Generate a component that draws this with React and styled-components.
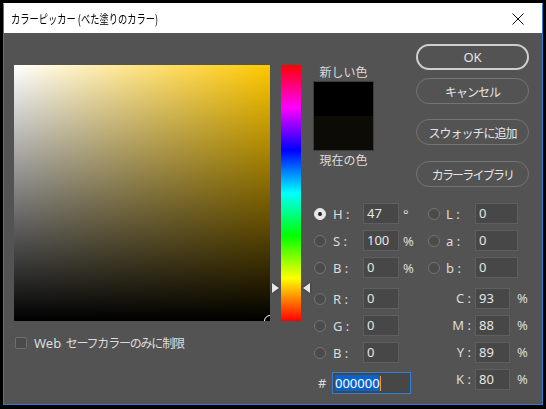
import React from 'react'
import styled, { createGlobalStyle } from 'styled-components';

const GlobalStyle = createGlobalStyle`
    html, body {
        margin: 0;
        padding: 0;
        background: #000;
    }
    body {
        font-family: "Noto Sans", "Noto Sans CJK JP", sans-serif;
    }
`;

const JP = '"Noto Sans CJK JP", "Noto Sans", sans-serif';

function Radio({ checked }) {
    return <RadioStyled $checked={checked} />
}

function Field({ label, value, unit, radio, checked }) {
    return (
        <>
            {radio ? <Radio checked={checked} /> : <span />}
            <Label>{label} :</Label>
            <Input>{value}</Input>
            <Unit>{unit}</Unit>
        </>
    )
}

const HUE = 47;

function App() {
    const arrowTop = 256 - Math.round(HUE / 360 * 256) - 5;
    return (
        <Page>
            <GlobalStyle />
            <Window>
                <TitleBar>
                    <Title><span>カラーピッカー (べた塗りのカラー)</span></Title>
                    <Close aria-label="close">
                        <svg width="12" height="12" viewBox="0 0 12 12">
                            <path d="M0.5 0.5 L11.5 11.5 M11.5 0.5 L0.5 11.5" stroke="#111" strokeWidth="1" />
                        </svg>
                    </Close>
                </TitleBar>
                <Body>
                    <LeftCol>
                        <ColorField>
                            <Marker />
                        </ColorField>
                        <CheckRow>
                            <Checkbox />
                            <CheckLabel><span>Web</span> セーフカラーのみに制限</CheckLabel>
                        </CheckRow>
                    </LeftCol>
                    <HueCol>
                        <HueBar>
                            <Arrow $side="left" style={{ top: `${arrowTop}px` }} />
                            <Arrow $side="right" style={{ top: `${arrowTop}px` }} />
                        </HueBar>
                    </HueCol>
                    <RightPanel>
                        <TopSection>
                            <SwatchCol>
                                <SwatchLabel>新しい色</SwatchLabel>
                                <Swatch>
                                    <SwatchHalf $color="#000" />
                                    <SwatchHalf $color="#0d0b06" />
                                </Swatch>
                                <SwatchLabel>現在の色</SwatchLabel>
                            </SwatchCol>
                            <ButtonCol>
                                <PillButton $primary>OK</PillButton>
                                <PillButton $mt={8}>キャンセル</PillButton>
                                <PillButton $mt={15}>スウォッチに追加</PillButton>
                                <PillButton $mt={16} $tight>カラーライブラリ</PillButton>
                            </ButtonCol>
                        </TopSection>

                        <HsbGrid>
                            <Field radio checked label="H" value="47" unit="°" />
                            <Radio />
                            <Label>L :</Label>
                            <Input>0</Input>

                            <Field radio label="S" value="100" unit="%" />
                            <Radio />
                            <Label>a :</Label>
                            <Input>0</Input>

                            <Field radio label="B" value="0" unit="%" />
                            <Radio />
                            <Label>b :</Label>
                            <Input>0</Input>
                        </HsbGrid>

                        <RgbGrid>
                            <Field radio label="R" value="0" />
                            <CmykLabel>C :</CmykLabel>
                            <Input>93</Input>
                            <CmykUnit>%</CmykUnit>

                            <Field radio label="G" value="0" />
                            <CmykLabel>M :</CmykLabel>
                            <Input>88</Input>
                            <CmykUnit>%</CmykUnit>

                            <Field radio label="B" value="0" />
                            <CmykLabel>Y :</CmykLabel>
                            <Input>89</Input>
                            <CmykUnit>%</CmykUnit>

                            <Hash>#</Hash>
                            <HexInput><Selected>000000</Selected><Caret /></HexInput>
                            <CmykLabel $top>K :</CmykLabel>
                            <Input $top>80</Input>
                            <CmykUnit $top>%</CmykUnit>
                        </RgbGrid>
                    </RightPanel>
                </Body>
            </Window>
        </Page>
    )
}

const Page = styled.div`
    width: 546px;
    height: 409px;
    padding: 3px 0 0 3px;
    box-sizing: border-box;
    background: #000;
    overflow: hidden;
`;

const Window = styled.div`
    width: 540px;
    height: 402px;
    box-sizing: border-box;
    border: 1px solid #2b7cd3;
    border-top-color: #fff;
    display: flex;
    flex-direction: column;
    background: #535353;
`;

const TitleBar = styled.div`
    height: 29px;
    background: #fff;
    display: flex;
    align-items: center;
    padding-left: 7px;
    flex-shrink: 0;
`;

const Title = styled.div`
    font-family: ${JP};
    font-size: 12.5px;
    color: #000;
    flex: 1;
    span {
        display: inline-block;
        transform: scaleX(0.74);
        transform-origin: left center;
        white-space: nowrap;
    }
`;

const Close = styled.div`
    width: 46px;
    height: 29px;
    display: flex;
    align-items: center;
    justify-content: center;
    margin-right: 1px;
`;

const Body = styled.div`
    flex: 1;
    display: flex;
    padding: 11px 0 0 10px;
    color: #dcdcdc;
`;

const LeftCol = styled.div`
    margin-top: 21px;
    width: 256px;
    display: flex;
    flex-direction: column;
`;

const ColorField = styled.div`
    width: 256px;
    height: 256px;
    position: relative;
    overflow: hidden;
    background:
        linear-gradient(to top, #000, rgba(0,0,0,0)),
        linear-gradient(to right, #fff, #ffc800);
`;

const Marker = styled.div`
    position: absolute;
    right: -6px;
    bottom: -6px;
    width: 10px;
    height: 10px;
    border: 1px solid #fff;
    border-radius: 50%;
`;

const CheckRow = styled.div`
    margin-top: 13px;
    margin-left: 1px;
    display: flex;
    align-items: center;
    gap: 7px;
`;

const Checkbox = styled.div`
    width: 10px;
    height: 10px;
    border: 1px solid #6f6f6f;
    border-radius: 2px;
    background: #4a4a4a;
`;

const CheckLabel = styled.div`
    font-family: ${JP};
    font-size: 12px;
    letter-spacing: -1.2px;
    color: #dcdcdc;
    span {
        font-family: "Noto Sans", sans-serif;
        font-size: 13px;
        letter-spacing: 0;
        margin-right: 3px;
    }
`;

const HueCol = styled.div`
    margin-top: 21px;
    margin-left: 2px;
    padding: 0 9px;
`;

const HueBar = styled.div`
    position: relative;
    width: 20px;
    height: 256px;
    background: linear-gradient(to bottom, #f00, #f0f, #00f, #0ff, #0f0, #ff0, #f00);
`;

const Arrow = styled.div`
    position: absolute;
    width: 0;
    height: 0;
    border-top: 5px solid transparent;
    border-bottom: 5px solid transparent;
    ${p => p.$side === 'left'
        ? 'left: -9px; border-left: 7px solid #e8e8e8;'
        : 'right: -9px; border-right: 7px solid #e8e8e8;'}
    filter: drop-shadow(0 0 1px #222);
`;

const RightPanel = styled.div`
    flex: 1;
    display: flex;
    flex-direction: column;
    padding-right: 13px;
`;

const TopSection = styled.div`
    display: flex;
    justify-content: space-between;
`;

const SwatchCol = styled.div`
    margin-top: 20px;
    margin-left: 3px;
    width: 61px;
    display: flex;
    flex-direction: column;
    align-items: center;
`;

const SwatchLabel = styled.div`
    font-family: ${JP};
    font-size: 12px;
    line-height: 16px;
    height: 16px;
    color: #dcdcdc;
`;

const Swatch = styled.div`
    width: 61px;
    height: 70px;
    box-sizing: border-box;
    border: 1px solid #3c3c3c;
    display: flex;
    flex-direction: column;
    margin: 1px 0;
`;

const SwatchHalf = styled.div`
    flex: 1;
    background: ${p => p.$color};
`;

const ButtonCol = styled.div`
    width: 113px;
    display: flex;
    flex-direction: column;
`;

const PillButton = styled.div`
    height: 26px;
    box-sizing: border-box;
    margin-top: ${p => p.$mt || 0}px;
    border: ${p => p.$primary ? '2px solid #cfcfcf' : '1px solid #747474'};
    border-radius: 13px;
    display: flex;
    align-items: center;
    justify-content: center;
    font-family: ${p => p.$primary ? '"Noto Sans", sans-serif' : JP};
    font-size: ${p => p.$primary ? '13px' : '12px'};
    letter-spacing: ${p => p.$primary ? '0' : p.$tight ? '-1.8px' : '-1px'};
    color: #e4e4e4;
`;

const HsbGrid = styled.div`
    margin-top: 16px;
    margin-left: 4px;
    display: grid;
    grid-template-columns: 19px 30px 36px 29px 18px 29px 43px;
    grid-auto-rows: 21px;
    row-gap: 6px;
    align-items: center;
`;

const RgbGrid = styled.div`
    margin-top: 10px;
    margin-left: 4px;
    display: grid;
    grid-template-columns: 19px 30px 36px 29px 47px 35px 1fr;
    grid-template-rows: 21px 21px 21px 25px;
    row-gap: 6px;
    align-items: center;
`;

const RadioStyled = styled.div`
    width: 12px;
    height: 12px;
    box-sizing: border-box;
    border-radius: 50%;
    border: 1px solid ${p => p.$checked ? '#e6e6e6' : '#747474'};
    background: ${p => p.$checked ? '#e6e6e6' : '#4b4b4b'};
    position: relative;
    &::after {
        content: '';
        display: ${p => p.$checked ? 'block' : 'none'};
        position: absolute;
        left: 3px;
        top: 3px;
        width: 4px;
        height: 4px;
        border-radius: 50%;
        background: #222;
    }
`;

const Label = styled.div`
    font-size: 13px;
    color: #dcdcdc;
    white-space: pre;
`;

const Input = styled.div`
    height: 21px;
    box-sizing: border-box;
    background: #474747;
    border: 1px solid #5f5f5f;
    font-size: 13px;
    line-height: 19px;
    padding-left: 3px;
    color: #e6e6e6;
    align-self: ${p => p.$top ? 'start' : 'center'};
`;

const Unit = styled.div`
    font-size: 13px;
    padding-left: 4px;
    color: #dcdcdc;
`;

const CmykLabel = styled.div`
    font-size: 13px;
    text-align: right;
    padding-right: 4px;
    color: #dcdcdc;
    align-self: ${p => p.$top ? 'start' : 'center'};
    line-height: 21px;
`;

const CmykUnit = styled.div`
    font-size: 13px;
    padding-left: 7px;
    color: #dcdcdc;
    align-self: ${p => p.$top ? 'start' : 'center'};
    line-height: 21px;
`;

const Hash = styled.div`
    font-size: 13px;
    padding-left: 4px;
    color: #dcdcdc;
    align-self: end;
    line-height: 21px;
`;

const HexInput = styled.div`
    grid-column: 2 / span 3;
    justify-self: start;
    margin-left: -1px;
    width: 79px;
    height: 22px;
    box-sizing: border-box;
    align-self: end;
    background: #474747;
    border: 1px solid #2f80d8;
    display: flex;
    align-items: center;
    padding-left: 2px;
    font-size: 13px;
`;

const Selected = styled.span`
    background: #0a62cc;
    color: #fff;
    line-height: 16px;
`;

const Caret = styled.span`
    width: 1px;
    height: 15px;
    background: #e8a040;
`;

export default App;
